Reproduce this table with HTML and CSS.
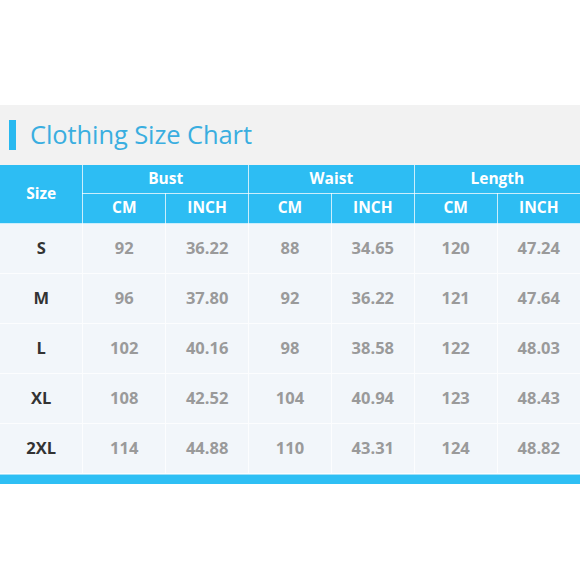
FILE: index.html
```html
<!DOCTYPE html>
<html>
<head>
<meta charset="utf-8">
<link rel="stylesheet" href="styles.css">
</head>
<body>
<div class="page">
  <div class="top-space"></div>
  <div class="chart">
    <div class="title-bar">
      <span class="accent"></span>
      <h1 class="title">Clothing Size Chart</h1>
    </div>
    <table class="size-table">
      <thead>
        <tr class="head-row1">
          <th rowspan="2" class="size-head">Size</th>
          <th colspan="2">Bust</th>
          <th colspan="2">Waist</th>
          <th colspan="2">Length</th>
        </tr>
        <tr class="head-row2">
          <th>CM</th><th>INCH</th>
          <th>CM</th><th>INCH</th>
          <th>CM</th><th>INCH</th>
        </tr>
      </thead>
      <tbody>
        <tr><td class="size">S</td><td>92</td><td>36.22</td><td>88</td><td>34.65</td><td>120</td><td>47.24</td></tr>
        <tr><td class="size">M</td><td>96</td><td>37.80</td><td>92</td><td>36.22</td><td>121</td><td>47.64</td></tr>
        <tr><td class="size">L</td><td>102</td><td>40.16</td><td>98</td><td>38.58</td><td>122</td><td>48.03</td></tr>
        <tr><td class="size">XL</td><td>108</td><td>42.52</td><td>104</td><td>40.94</td><td>123</td><td>48.43</td></tr>
        <tr><td class="size">2XL</td><td>114</td><td>44.88</td><td>110</td><td>43.31</td><td>124</td><td>48.82</td></tr>
      </tbody>
    </table>
    <div class="bottom-bar"></div>
  </div>
</div>
</body>
</html>
```
FILE: styles.css
```css
html, body {
  margin: 0;
  padding: 0;
  background: #ffffff;
}
.page {
  width: 580px;
  height: 580px;
  font-family: "Open Sans", "Noto Sans", sans-serif;
}
.top-space {
  height: 105px;
}
.chart {
  width: 580px;
}
.title-bar {
  height: 60px;
  background: #f2f2f2;
  display: flex;
  align-items: center;
  box-sizing: border-box;
  padding: 0 0 0 9px;
}
.accent {
  width: 7px;
  height: 30px;
  background: #29b9f0;
  margin-right: 14px;
}
.title {
  margin: 0 0 1px 0;
  font-size: 25.5px;
  font-weight: 400;
  color: #3aaee0;
  letter-spacing: -0.1px;
  line-height: 1;
}
.size-table {
  width: 580px;
  border-collapse: collapse;
  table-layout: fixed;
}
.size-table th {
  background: #2dbdf3;
  color: #ffffff;
  font-weight: 700;
  font-size: 15.5px;
  text-align: center;
  padding: 0 0 3px 0;
  border: 1.5px solid rgba(255, 255, 255, 0.75);
}
.head-row1 th {
  height: 25px;
  border-top: none;
}
.head-row2 th {
  height: 26px;
}
.size-table th:first-child {
  border-left: none;
}
.size-table tr th:last-child {
  border-right: none;
}
.size-head {
  font-size: 16px;
}
.size-table td {
  height: 47px;
  background: #f2f6fa;
  text-align: center;
  font-size: 16.5px;
  font-weight: 700;
  color: #9a9a9a;
  padding: 0 0 2px 0;
  border: 1px solid #fcfdfe;
}
.size-table td:first-child {
  border-left: none;
}
.size-table td:last-child {
  border-right: none;
}
.size-table td.size {
  color: #333333;
}
.bottom-bar {
  height: 10px;
  background: #2ebff4;
  border-top: 1px solid #9fe0f8;
  box-sizing: border-box;
}
```
